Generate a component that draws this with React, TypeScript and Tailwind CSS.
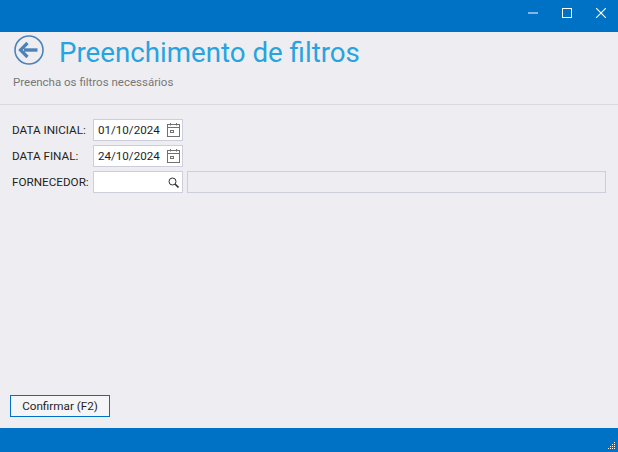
const font = { fontFamily: 'Roboto, "Noto Sans", sans-serif' };

function CalendarIcon() {
  return (
    <svg width="13" height="14" viewBox="0 0 13 14" fill="none" stroke="#717171" strokeWidth="1" className="shrink-0">
      <path d="M3.5 0v2.5M9.5 0v2.5" />
      <rect x="0.5" y="1.5" width="12" height="12" />
      <path d="M0.5 4.5h12" />
      <rect x="3.5" y="7.5" width="3" height="2" />
    </svg>
  );
}

function DateRow({ label, value }: { label: string; value: string }) {
  return (
    <div className="flex h-[22px] items-center">
      <span className="w-[81px] pt-[1px] text-[11.7px] text-[#1e1e1e]">{label}</span>
      <div className="flex h-full w-[90px] items-center justify-between border border-[#ccceDB] bg-white pl-[4px] pr-[2px]">
        <span className="pt-[1px] text-[11.6px] text-[#1e1e1e]">{value}</span>
        <CalendarIcon />
      </div>
    </div>
  );
}

export default function App() {
  return (
    <div style={font} className="flex h-[452px] w-[618px] flex-col overflow-hidden bg-[#eeeef2]">
      <div className="flex h-[32px] shrink-0 items-start justify-end bg-[#0072c6]">
        <div className="flex h-[25px] w-[34px] items-center justify-center">
          <svg width="10" height="2" viewBox="0 0 10 2"><path d="M0 1h10" stroke="#fff" /></svg>
        </div>
        <div className="flex h-[25px] w-[34px] items-center justify-center">
          <svg width="10" height="10" viewBox="0 0 10 10" fill="none"><rect x="0.5" y="0.5" width="9" height="9" stroke="#fff" /></svg>
        </div>
        <div className="flex h-[25px] w-[34px] items-center justify-center">
          <svg width="10" height="10" viewBox="0 0 10 10" fill="none"><path d="M0 0l10 10M10 0L0 10" stroke="#fff" strokeWidth="1.1" /></svg>
        </div>
      </div>

      <div className="flex h-[73px] shrink-0 flex-col border-b border-[#d9d9dd]">
        <div className="flex h-[40px] items-start pl-[14px]">
          <svg width="30" height="30" viewBox="0 0 30 30" fill="none" className="mt-[3px] shrink-0">
            <circle cx="15" cy="15" r="14" stroke="#4d82b8" strokeWidth="1.6" />
            <path d="M23.5 15H10" stroke="#4d82b8" strokeWidth="3.4" />
            <path d="M13.5 8l-7 7 7 7" stroke="#4d82b8" strokeWidth="3.2" />
          </svg>
          <h1 className="ml-[15px] mt-[7px] text-[27.7px] font-normal leading-[28px] text-[#27a4e0]">Preenchimento de filtros</h1>
        </div>
        <p className="mt-[2px] pl-[13px] text-[11.5px] text-[#777777]">Preencha os filtros necessários</p>
      </div>

      <div className="flex flex-1 flex-col pl-[12px] pr-[12px] pt-[14px]">
        <div className="flex flex-col gap-[4px]">
          <DateRow label="DATA INICIAL:" value="01/10/2024" />
          <DateRow label="DATA FINAL:" value="24/10/2024" />
          <div className="flex h-[22px] items-center">
            <span className="w-[81px] pt-[1px] text-[11.7px] text-[#1e1e1e]">FORNECEDOR:</span>
            <div className="flex h-full w-[90px] items-center justify-end border border-[#ccceDB] bg-white pr-[3px]">
              <svg width="11" height="11" viewBox="0 0 11 11" fill="none" stroke="#333">
                <circle cx="4.5" cy="4.5" r="3.5" />
                <path d="M7 7l3.5 3.5" strokeWidth="1.6" />
              </svg>
            </div>
            <div className="ml-[4px] h-full flex-1 border border-[#ccceDB]" />
          </div>
        </div>
        <div className="mt-auto mb-[11px] -ml-[2px]">
          <button className="flex h-[22px] w-[100px] items-center justify-center border border-[#0072c6] bg-[#f5f5f8] pt-[1px] text-[11.7px] text-[#1e1e1e]">
            Confirmar (F2)
          </button>
        </div>
      </div>

      <div className="relative h-[24px] shrink-0 bg-[#0072c6]">
        <svg width="8" height="8" viewBox="0 0 8 8" className="absolute bottom-[2px] right-[2px]" fill="#fff">
          <rect x="6" y="0" width="1" height="1" />
          <rect x="4" y="2" width="1" height="1" /><rect x="6" y="2" width="1" height="1" />
          <rect x="2" y="4" width="1" height="1" /><rect x="4" y="4" width="1" height="1" /><rect x="6" y="4" width="1" height="1" />
          <rect x="0" y="6" width="1" height="1" /><rect x="2" y="6" width="1" height="1" /><rect x="4" y="6" width="1" height="1" /><rect x="6" y="6" width="1" height="1" />
        </svg>
      </div>
    </div>
  );
}
